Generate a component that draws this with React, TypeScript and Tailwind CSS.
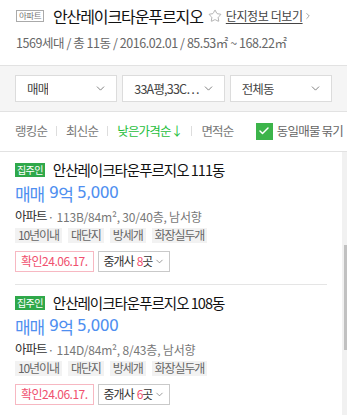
import { ChevronDown, Star, Check } from 'lucide-react';

const KR = "font-['Noto_Sans_CJK_KR','Noto_Sans',sans-serif]";

type Listing = {
  dong: string;
  area: string;
  floor: string;
  agents: number;
};

const listings: Listing[] = [
  { dong: '111동', area: '113B/84m²', floor: '30/40층', agents: 8 },
  { dong: '108동', area: '114D/84m²', floor: '8/43층', agents: 6 },
];

const tags = ['10년이내', '대단지', '방세개', '화장실두개'];

function Select({ label }: { label: string }) {
  return (
    <div className="flex h-[27px] items-center justify-between border border-[#dcdcdc] bg-white pl-[11px] pr-[9px]">
      <span className="truncate text-[12.5px] leading-[17px] tracking-[-0.8px] text-[#444]">{label}</span>
      <ChevronDown size={13} strokeWidth={1.5} className="shrink-0 text-[#666]" />
    </div>
  );
}

function ListingCard({ data, last }: { data: Listing; last?: boolean }) {
  return (
    <div className={`pt-[11px] ${last ? '' : 'border-b border-[#e5e5e5] pb-[12px]'}`}>
      <div className="flex h-[15px] items-center">
        <span className="flex h-[14px] items-center bg-[#2fa84a] px-[2px] text-[10px] leading-none tracking-[-0.6px] text-white">
          집주인
        </span>
        <span className="ml-[8px] text-[14.5px] leading-none tracking-[-1px] text-[#111]">
          안산레이크타운푸르지오 {data.dong}
        </span>
      </div>
      <div className="mt-[8px] flex h-[16px] items-center text-[17px] leading-none text-[#4f8ff0]">
        <span className="tracking-[-1.2px]">매매</span>
        <span className="ml-[5px] font-['DejaVu_Sans','Noto_Sans_CJK_KR',sans-serif] text-[15.5px] tracking-[-0.5px]">9</span>
        <span className="tracking-[-1px]">억</span>
        <span className="ml-[4px] font-['DejaVu_Sans',sans-serif] text-[15.5px] tracking-[-0.6px]">5,000</span>
      </div>
      <div className="mt-[9px] flex h-[12px] items-center leading-none">
        <span className="text-[12.5px] tracking-[-1px] text-[#333]">아파트</span>
        <span className="ml-[1px] text-[12px] tracking-[-0.2px] text-[#777]">
          · {data.area}, {data.floor}, 남서향
        </span>
      </div>
      <div className="mt-[5px] flex gap-[6px]">
        {tags.map((t) => (
          <span
            key={t}
            className="flex h-[15px] items-center bg-[#f2f2f2] px-[3px] text-[12px] leading-none tracking-[-1.1px] text-[#666]"
          >
            {t}
          </span>
        ))}
      </div>
      <div className="mt-[8px] flex gap-[4px]">
        <span className="flex h-[21px] items-center border border-[#f7b8c2] px-[5px] text-[12px] leading-none tracking-[-0.5px] text-[#f0506e]">
          확인24.06.17.
        </span>
        <span className="flex h-[21px] items-center border border-[#c9c9c9] pl-[5px] pr-[4px] text-[12px] leading-none tracking-[-1px] text-[#333]">
          중개사 <span className="ml-[3px] text-[#f0506e]">{data.agents}</span>곳
          <ChevronDown size={11} strokeWidth={1.4} className="ml-[2px] text-[#666]" />
        </span>
      </div>
    </div>
  );
}

export default function App() {
  return (
    <div className={`h-[415px] w-[347px] overflow-hidden bg-white ${KR}`}>
      <div className="px-[16px] pt-[7px]">
        <div className="flex h-[17px] items-center">
          <span className="flex h-[12px] items-center border border-[#aaa] px-[2px] text-[8.5px] leading-none tracking-[-0.5px] text-[#777]">
            아파트
          </span>
          <span className="ml-[9px] text-[16px] leading-none tracking-[-1.1px] text-[#111]">
            안산레이크타운푸르지오
          </span>
          <Star size={14} strokeWidth={1.3} className="ml-[5px] text-[#999]" />
          <span className="ml-[4px] text-[12px] leading-none tracking-[-0.4px] text-[#444] underline underline-offset-2">
            단지정보 더보기
          </span>
          <ChevronDown size={10} strokeWidth={1.4} className="-rotate-90 text-[#666]" />
        </div>
        <div className="mt-[13px] text-[12.5px] leading-none tracking-[-0.45px] text-[#666]">
          1569세대 / 총 11동 / 2016.02.01 / 85.53㎡ ~ 168.22㎡
        </div>
      </div>

      <div className="mt-[15px] h-[47px] border-y border-[#e2e2e2] bg-[#f5f5f5] px-[15px] pt-[9px]">
        <div className="grid grid-cols-3 gap-[5px]">
          <Select label="매매" />
          <Select label="33A평,33C…" />
          <Select label="전체동" />
        </div>
      </div>

      <div className="flex h-[40px] items-center border-b border-[#e2e2e2] pl-[15px] pr-[4px] text-[12.5px] leading-none tracking-[-0.8px]">
        <span className="text-[#777]">랭킹순</span>
        <span className="mx-[9px] h-[10px] w-px bg-[#ddd]" />
        <span className="text-[#777]">최신순</span>
        <span className="mx-[9px] h-[10px] w-px bg-[#ddd]" />
        <span className="text-[#1fbe3c]">낮은가격순↓</span>
        <span className="mx-[9px] h-[10px] w-px bg-[#ddd]" />
        <span className="text-[#777]">면적순</span>
        <span className="ml-auto flex items-center">
          <span className="flex h-[17px] w-[17px] items-center justify-center bg-[#3cb44a]">
            <Check size={12} strokeWidth={3} className="text-white" />
          </span>
          <span className="ml-[4px] whitespace-nowrap text-[#666]">동일매물 묶기</span>
        </span>
      </div>

      <div className="flex h-[265px]">
        <div className="flex-1 pl-[15px] pr-[15px]">
          {listings.map((l, i) => (
            <ListingCard key={l.dong} data={l} last={i === listings.length - 1} />
          ))}
        </div>
        <div className="flex w-[5px] justify-end bg-[#f1f1f1]">
          <div className="mt-[93px] h-[105px] w-[3px] bg-[#c1c1c1]" />
        </div>
      </div>
    </div>
  );
}
